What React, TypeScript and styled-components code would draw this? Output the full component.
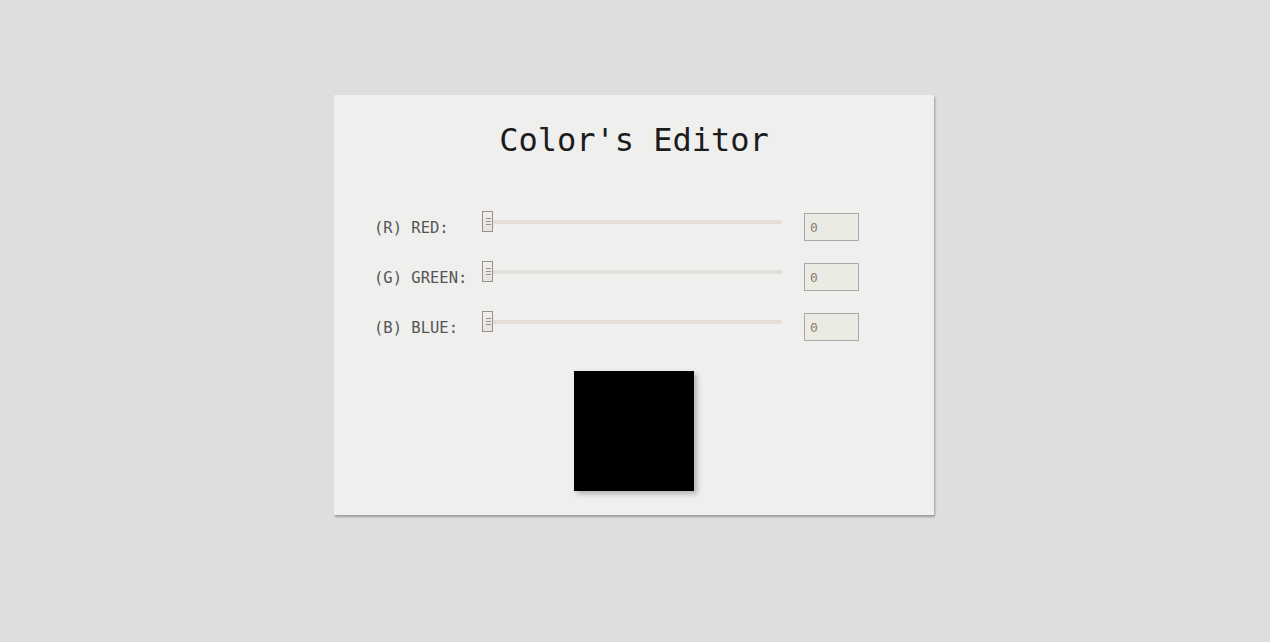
import React, { useState } from "react";
import styled, { createGlobalStyle } from "styled-components";

const Global = createGlobalStyle`
  html, body { margin: 0; padding: 0; background: #dedede; }
  body { font-family: "DejaVu Sans Mono", "Liberation Mono", monospace; }
`;

const Page = styled.div`
  display: flex;
  justify-content: center;
  padding: 95px 2px 0 0;
  min-height: 642px;
  box-sizing: border-box;
`;

const Card = styled.div`
  width: 600px;
  height: 420px;
  box-sizing: border-box;
  background: #efefed;
  box-shadow: 1px 2px 2px rgba(0, 0, 0, 0.3);
  padding: 27px 40px 24px 40px;
  display: flex;
  flex-direction: column;
`;

const Title = styled.h1`
  margin: 0;
  text-align: center;
  font-family: "DejaVu Sans Mono", monospace;
  font-weight: normal;
  font-size: 32px;
  line-height: 37px;
  color: #1c1c1c;
`;

const Rows = styled.div`
  display: flex;
  flex-direction: column;
  gap: 22px;
  margin-top: 52px;
`;

const Row = styled.div`
  display: grid;
  grid-template-columns: 108px 300px 55px;
  align-items: center;
  height: 28px;
`;

const Label = styled.label`
  font-family: "DejaVu Sans Mono", monospace;
  font-size: 15.5px;
  color: #555;
  padding-top: 1px;
`;

const Range = styled.input.attrs({ type: "range", min: 0, max: 255 })`
  -webkit-appearance: none;
  appearance: none;
  margin: 0 0 11px 0;
  width: 300px;
  height: 21px;
  background: transparent;

  &::-webkit-slider-runnable-track {
    height: 4px;
    background: #e4ded9;
  }
  &::-webkit-slider-thumb {
    -webkit-appearance: none;
    width: 11px;
    height: 21px;
    margin-top: -8.5px;
    box-sizing: border-box;
    border: 1px solid #9b918a;
    background:
      linear-gradient(#9b918a, #9b918a) 3px 6px / 5px 1px no-repeat,
      linear-gradient(#9b918a, #9b918a) 3px 9px / 5px 1px no-repeat,
      linear-gradient(#9b918a, #9b918a) 3px 12px / 5px 1px no-repeat,
      linear-gradient(#f1efec, #e6e2dd);
    cursor: pointer;
  }
`;

const NumberBox = styled.input`
  width: 55px;
  height: 28px;
  margin-left: 22px;
  box-sizing: border-box;
  border: 1px solid #a9a9a9;
  background: #ebebe4;
  padding: 0 0 0 5px;
  font-family: "DejaVu Sans Mono", monospace;
  font-size: 13px;
  color: #857d72;
  outline: none;
`;

const Swatch = styled.div<{ $color: string }>`
  width: 120px;
  height: 120px;
  margin: 32px auto 0;
  background: ${(p) => p.$color};
  box-shadow: 3px 3px 5px rgba(0, 0, 0, 0.25);
`;

type Channel = { key: "r" | "g" | "b"; label: string };

const channels: Channel[] = [
  { key: "r", label: "(R) RED:" },
  { key: "g", label: "(G) GREEN:" },
  { key: "b", label: "(B) BLUE:" },
];

export default function App() {
  const [rgb, setRgb] = useState({ r: 0, g: 0, b: 0 });
  const set = (k: "r" | "g" | "b", v: number) =>
    setRgb((s) => ({ ...s, [k]: Math.max(0, Math.min(255, v || 0)) }));

  return (
    <>
      <Global />
      <Page>
        <Card>
          <Title>Color's Editor</Title>
          <Rows>
            {channels.map((c) => (
              <Row key={c.key}>
                <Label>{c.label}</Label>
                <Range
                  value={rgb[c.key]}
                  onChange={(e) => set(c.key, Number(e.target.value))}
                />
                <NumberBox
                  value={rgb[c.key]}
                  onChange={(e) => set(c.key, Number(e.target.value))}
                />
              </Row>
            ))}
          </Rows>
          <Swatch $color={`rgb(${rgb.r}, ${rgb.g}, ${rgb.b})`} />
        </Card>
      </Page>
    </>
  );
}
